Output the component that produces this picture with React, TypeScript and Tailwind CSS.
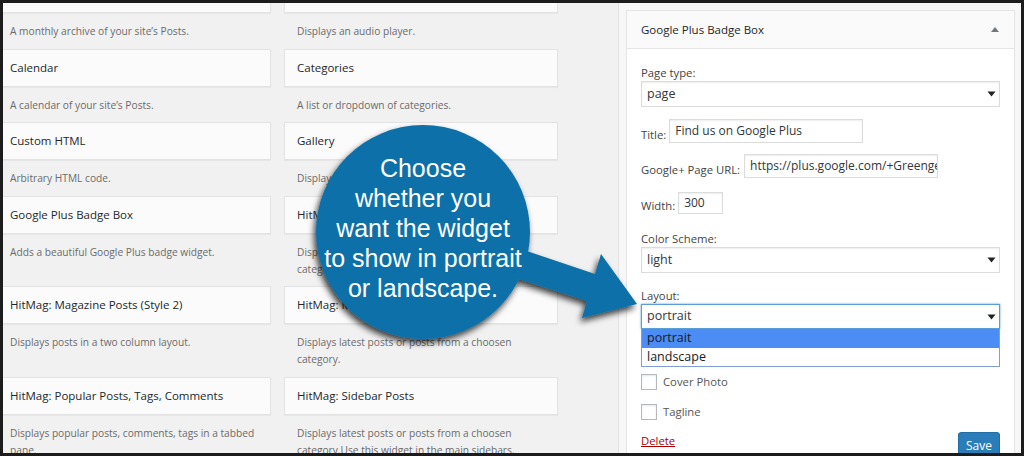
import React from "react";

type W = { title: string; desc: React.ReactNode };

const rows: [W, W][] = [
  [
    { title: "Archives", desc: "A monthly archive of your site\u2019s Posts." },
    { title: "Audio", desc: "Displays an audio player." },
  ],
  [
    { title: "Calendar", desc: "A calendar of your site\u2019s Posts." },
    { title: "Categories", desc: "A list or dropdown of categories." },
  ],
  [
    { title: "Custom HTML", desc: "Arbitrary HTML code." },
    { title: "Gallery", desc: "Displays a gallery." },
  ],
  [
    { title: "Google Plus Badge Box", desc: "Adds a beautiful Google Plus badge widget." },
    {
      title: "HitMag: Category Posts (Style 1)",
      desc: (
        <>
          Displays latest posts or posts from a choosen
          <br />
          category.
        </>
      ),
    },
  ],
  [
    { title: "HitMag: Magazine Posts (Style 2)", desc: "Displays posts in a two column layout." },
    {
      title: "HitMag: Magazine Posts (Style 1)",
      desc: (
        <>
          Displays latest posts or posts from a choosen
          <br />
          category.
        </>
      ),
    },
  ],
  [
    {
      title: "HitMag: Popular Posts, Tags, Comments",
      desc: (
        <>
          Displays popular posts, comments, tags in a tabbed
          <br />
          pane.
        </>
      ),
    },
    {
      title: "HitMag: Sidebar Posts",
      desc: (
        <>
          Displays latest posts or posts from a choosen
          <br />
          category.Use this widget in the main sidebars.
        </>
      ),
    },
  ],
];

function Cell({ w }: { w: W }) {
  return (
    <div className="flex flex-col">
      <div className="h-[38px] bg-[#fbfbfb] border border-[#e3e3e3] shadow-[0_1px_1px_rgba(0,0,0,0.04)] flex items-center pl-[12px] text-[11.5px] text-[#23282d] font-medium whitespace-nowrap">
        {w.title}
      </div>
      <div className="pt-[10px] pb-[8.5px] px-[13px] text-[10.2px] leading-[17px] text-[#6b6b6b] whitespace-nowrap">
        {w.desc}
      </div>
    </div>
  );
}

function Arrow() {
  return (
    <svg width="9" height="6" viewBox="0 0 9 6" className="shrink-0">
      <path d="M0.5 0.5 L8.5 0.5 L4.5 5.5 Z" fill="#222" />
    </svg>
  );
}

function Select({ value, focused }: { value: string; focused?: boolean }) {
  return (
    <div
      className={
        "bg-white flex items-center justify-between pl-[5px] pr-[3px] text-[12.5px] text-[#32373c] " +
        (focused
          ? "h-[25px] border border-[#5b9dd9] shadow-[0_0_2px_rgba(30,140,190,0.8)]"
          : "h-[26px] border border-[#dcdcdc] shadow-[inset_0_1px_2px_rgba(0,0,0,0.07)]")
      }
    >
      <span>{value}</span>
      <Arrow />
    </div>
  );
}

function Label({ children }: { children: React.ReactNode }) {
  return <div className="text-[11.3px] leading-[16px] text-[#444]">{children}</div>;
}

function InlineField({
  label,
  value,
  width,
  height,
  gap,
  mt,
}: {
  label: string;
  value: string;
  width: string;
  height: string;
  gap: string;
  mt: string;
}) {
  return (
    <div className={"flex items-end " + gap + " " + mt}>
      <span className="text-[11.3px] leading-[16px] text-[#444]">{label}</span>
      <div
        className={
          "bg-white border border-[#dcdcdc] shadow-[inset_0_1px_2px_rgba(0,0,0,0.07)] pl-[5px] text-[12px] text-[#32373c] overflow-hidden whitespace-nowrap flex items-center " +
          width +
          " " +
          height
        }
      >
        {value}
      </div>
    </div>
  );
}

function Checkbox({ label, mt }: { label: string; mt: string }) {
  return (
    <div className={"flex items-center h-[16px] gap-[6px] " + mt}>
      <div className="w-[16px] h-[16px] border border-[#b4b9be] bg-white shadow-[inset_0_1px_2px_rgba(0,0,0,0.1)]" />
      <span className="text-[11.3px] leading-[16px] text-[#555]">{label}</span>
    </div>
  );
}

export default function App() {
  return (
    <div className="relative w-[1024px] h-[456px] overflow-hidden border-[3px] border-[#1c1c1c] bg-[#f1f1f1] font-['Open_Sans',sans-serif]">
      <div className="flex items-start">
        <div className="grid grid-cols-[274px_274px] gap-x-[13px] ml-[-6px] mt-[-28px] shrink-0">
          {rows.map((r, i) => (
            <React.Fragment key={i}>
              <Cell w={r[0]} />
              <Cell w={r[1]} />
            </React.Fragment>
          ))}
        </div>
        <div className="ml-[60px] flex-1 self-stretch bg-[#f7f7f7] border-l border-[#e2e2e2] pt-[7px] pl-[7px]">
          <div className="w-[389px] bg-white border border-[#e5e5e5] shadow-[0_1px_1px_rgba(0,0,0,0.04)]">
            <div className="h-[38px] bg-[#fafafa] border-b border-[#e5e5e5] flex items-center justify-between pl-[14px] pr-[15px]">
              <span className="text-[11.5px] text-[#23282d] font-medium">Google Plus Badge Box</span>
              <svg width="8" height="5" viewBox="0 0 8 5">
                <path d="M0 5 L4 0 L8 5 Z" fill="#72777c" />
              </svg>
            </div>
            <div className="px-[14px] pt-[16px] pb-[20px]">
              <Label>Page type:</Label>
              <Select value="page" />
              <InlineField label="Title:" value="Find us on Google Plus" width="w-[194px]" height="h-[24px]" gap="gap-[3px]" mt="mt-[12px]" />
              <InlineField
                label="Google+ Page URL:"
                value="https://plus.google.com/+GreengeeksCom"
                width="w-[194px]"
                height="h-[24px]"
                gap="gap-[4px]"
                mt="mt-[11px]"
              />
              <InlineField label="Width:" value="300" width="w-[45px]" height="h-[22px]" gap="gap-[3px]" mt="mt-[14px]" />
              <div className="mt-[17px]">
                <Label>Color Scheme:</Label>
              </div>
              <Select value="light" />
              <div className="mt-[15px]">
                <Label>Layout:</Label>
              </div>
              <div className="relative">
                <Select value="portrait" focused />
                <div className="absolute left-0 right-0 top-full bg-white border-x border-b border-[#7f9fd3] text-[12.5px] text-[#1a1a1a] z-10">
                  <div className="h-[19px] bg-[#4b8cf5] pl-[5px] flex items-center">portrait</div>
                  <div className="h-[18px] pl-[5px] flex items-center">landscape</div>
                </div>
              </div>
              <Checkbox label="Cover Photo" mt="mt-[45px]" />
              <Checkbox label="Tagline" mt="mt-[14px]" />
              <div className="mt-[12px] flex justify-between items-start">
                <a className="pt-[1px] leading-[16px] text-[11.3px] text-[#a00] underline">Delete</a>
                <button className="h-[28px] w-[42px] rounded-[3px] bg-[#2a7db8] border border-[#1f6fa6] text-white text-[12px] shadow-[0_1px_0_#006799]">
                  Save
                </button>
              </div>
            </div>
          </div>
        </div>
      </div>

      <div className="absolute left-[-3px] top-[-3px] w-[1024px] h-[456px] pointer-events-none">
        <svg width="1024" height="456" viewBox="0 0 1024 456" className="absolute left-0 top-0">
          <defs>
            <filter id="sh" x="-30%" y="-30%" width="160%" height="160%">
              <feDropShadow dx="-2" dy="4" stdDeviation="3" floodColor="#000" floodOpacity="0.75" />
            </filter>
          </defs>
          <g filter="url(#sh)" fill="#0b70a8">
            <circle cx="423" cy="232" r="107" />
            <polygon points="500,242 595,274 601,254 637,304 582,318 587,301 500,273" />
          </g>
        </svg>
        <div className="absolute left-[303px] top-[153px] w-[240px] text-center text-white text-[25px] leading-[30px] font-['Liberation_Sans',Arial,sans-serif]">
          Choose
          <br />
          whether you
          <br />
          want the widget
          <br />
          to show in portrait
          <br />
          or landscape.
        </div>
      </div>
    </div>
  );
}
